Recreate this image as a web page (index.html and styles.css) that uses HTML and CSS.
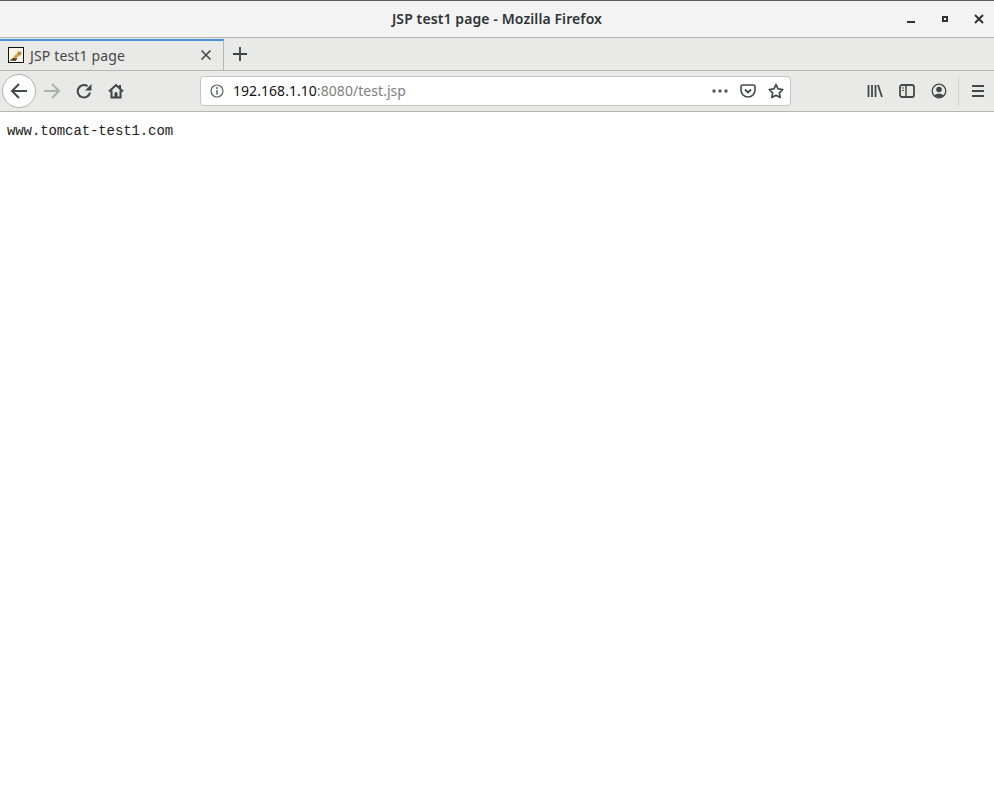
FILE: index.html
```html
<!DOCTYPE html>
<html lang="en">
<head>
  <meta charset="UTF-8">
  <title>JSP test1 page</title>
  <link rel="stylesheet" href="styles.css">
</head>
<body>

  <div class="titlebar">
    <span class="title">JSP test1 page - Mozilla Firefox</span>
    <div class="wincontrols">
      <svg width="12" height="12" viewBox="0 0 12 12"><path d="M2 9h8" stroke="#2e3436" stroke-width="2"/></svg>
      <svg width="12" height="12" viewBox="0 0 12 12"><rect x="4" y="4" width="4" height="4" fill="none" stroke="#2e3436" stroke-width="2"/></svg>
      <svg width="12" height="12" viewBox="0 0 12 12"><path d="M2 2l8 8M10 2l-8 8" stroke="#2e3436" stroke-width="2"/></svg>
    </div>
  </div>

  <div class="tabstrip">
    <div class="tab">
      <svg class="favicon" width="16" height="16" viewBox="0 0 16 16">
        <rect x="0.5" y="0.5" width="15" height="15" fill="#f7f4ea" stroke="#111"/>
        <path d="M2 12.500l3-1.500 2-3 2-1.500 1-3 1.200 1.200h1L13 3.500l.5 3-1 2-2.500 1-1.500 2-3 .5z" fill="#d3a04c"/>
        <path d="M1.500 13.500l4-2.500 4 .5-2 2.500z" fill="#4e4330"/>
        <path d="M10.500 6h2v1h-2z" fill="#5d4a26"/>
      </svg>
      <span class="tabtitle">JSP test1 page</span>
      <svg class="tabclose" width="12" height="12" viewBox="0 0 12 12"><path d="M1.500 1.500l9 9M10.500 1.500l-9 9" stroke="#45484a" stroke-width="1.600"/></svg>
    </div>
    <div class="newtab">
      <svg width="16" height="16" viewBox="0 0 16 16"><path d="M8 1v14M1 8h14" stroke="#3f4345" stroke-width="1.800"/></svg>
    </div>
  </div>

  <div class="navbar">
    <div class="backbtn">
      <svg width="18" height="18" viewBox="0 0 18 18"><path d="M17 9H2M9 2L2 9l7 7" fill="none" stroke="#45484a" stroke-width="2"/></svg>
    </div>
    <svg class="forward" width="18" height="18" viewBox="0 0 18 18"><path d="M1 9h15M9 2l7 7-7 7" fill="none" stroke="#adafb0" stroke-width="2"/></svg>
    <svg class="reload" width="16" height="16" viewBox="0 0 16 16"><path d="M14 9.500A6.200 6.200 0 1 1 11.500 3.200" fill="none" stroke="#45484a" stroke-width="2"/><path d="M15.500 1v6.500H9z" fill="#45484a"/></svg>
    <svg class="home" width="16" height="16" viewBox="0 0 16 16"><path d="M1 8.500L8 2l7 6.500" fill="none" stroke="#3f4345" stroke-width="2"/><path d="M3.500 7.500V14.500h9V7.500" fill="none" stroke="#3f4345" stroke-width="2"/><path d="M6.500 15V10.500a1.500 1.500 0 0 1 3 0V15z" fill="#3f4345"/><path d="M11 2h2v3h-2z" fill="#3f4345"/></svg>

    <div class="urlbar">
      <svg class="info" width="14" height="14" viewBox="0 0 14 14"><circle cx="7" cy="7" r="6" fill="none" stroke="#5b5e60" stroke-width="1.200"/><path d="M7 6v4.500" stroke="#5b5e60" stroke-width="1.500"/><circle cx="7" cy="4" r="1" fill="#5b5e60"/></svg>
      <span class="url"><span class="host">192.168.1.10</span>:8080/test.jsp</span>
      <svg class="dots" width="16" height="4" viewBox="0 0 16 4"><circle cx="2" cy="2" r="1.700" fill="#55585a"/><circle cx="8" cy="2" r="1.700" fill="#55585a"/><circle cx="14" cy="2" r="1.700" fill="#55585a"/></svg>
      <svg class="pocket" width="16" height="14" viewBox="0 0 16 14"><path d="M1 2.500a1.500 1.500 0 0 1 1.500-1.500h11A1.500 1.500 0 0 1 15 2.500V6a7 7 0 0 1-14 0z" fill="none" stroke="#45484a" stroke-width="1.600"/><path d="M5 5.500l3 3 3-3" fill="none" stroke="#45484a" stroke-width="1.800"/></svg>
      <svg class="star" width="16" height="16" viewBox="0 0 16 16"><path d="M8 1.500l2 4.400 4.800.6-3.500 3.300.9 4.700L8 12.200l-4.200 2.300.9-4.700L1.200 6.500 6 5.900z" fill="none" stroke="#45484a" stroke-width="1.700" stroke-linejoin="round"/></svg>
    </div>

    <div class="tools">
      <svg width="16" height="14" viewBox="0 0 16 14"><path d="M1.500 1v12M5 1v12M8.500 1v12M11 1l4 12" stroke="#45484a" stroke-width="1.800"/></svg>
      <svg width="16" height="14" viewBox="0 0 16 14"><rect x="1" y="1" width="14" height="12" rx="2" fill="none" stroke="#45484a" stroke-width="1.800"/><path d="M7 1v12" stroke="#45484a" stroke-width="1.500"/><path d="M3 4h2M3 6.500h2" stroke="#45484a"/></svg>
      <svg width="16" height="16" viewBox="0 0 16 16"><circle cx="8" cy="8" r="6.800" fill="none" stroke="#45484a" stroke-width="1.300"/><circle cx="8" cy="6.500" r="2.800" fill="#45484a"/><path d="M3.500 12.500c1-2.500 8-2.500 9 0-2 2-7 2-9 0z" fill="#45484a"/></svg>
    </div>
    <div class="menusep"></div>
    <svg class="menu" width="14" height="12" viewBox="0 0 14 12"><path d="M1 1h12M1 6h12M1 11h12" stroke="#45484a" stroke-width="2"/></svg>
  </div>

  <div class="content">www.tomcat-test1.com</div>

</body>
</html>
```

FILE: styles.css
```css
html, body {
  margin: 0;
  padding: 0;
}

body {
  width: 994px;
  height: 802px;
  overflow: hidden;
  background-color: #fff;
  font-family: "Noto Sans", "Open Sans", sans-serif;
}

svg {
  display: block;
  flex: none;
}

.titlebar {
  height: 38px;
  box-sizing: border-box;
  border-top: 1px solid #5e5e5e;
  border-bottom: 1px solid #b3b3b0;
  background-color: #f3f3f3;
  padding-bottom: 2px;
  display: flex;
  align-items: center;
  justify-content: center;
  position: relative;
}

.title {
  font-size: 14px;
  font-weight: 600;
  letter-spacing: 0.1px;
  color: #2e3436;
}

.wincontrols {
  position: absolute;
  right: 9px;
  top: 12px;
  display: flex;
  gap: 22px;
}

.tabstrip {
  height: 33px;
  box-sizing: border-box;
  background-color: #e9e9e7;
  padding-top: 1px;
  border-bottom: 1px solid #b5b5b3;
  display: flex;
}

.tab {
  width: 224px;
  height: 32px;
  box-sizing: border-box;
  border-top: 2px solid #4a90d9;
  border-right: 1px solid #b5b5b3;
  padding: 0 11px 2px 8px;
  display: flex;
  align-items: center;
}

.tabtitle {
  flex: 1;
  margin-left: 6px;
  font-size: 14px;
  letter-spacing: 0.15px;
  color: #45484a;
}

.newtab {
  width: 31px;
  padding-bottom: 2px;
  display: flex;
  align-items: center;
  justify-content: center;
}

.navbar {
  height: 41px;
  box-sizing: border-box;
  background-color: #e9e9e7;
  border-bottom: 1px solid #b5b5b3;
  display: flex;
  align-items: center;
  padding-left: 2px;
}

.backbtn {
  width: 32px;
  height: 32px;
  border: 1px solid #b1b1b1;
  border-radius: 50%;
  background-color: #fff;
  display: flex;
  align-items: center;
  justify-content: center;
}

.forward {
  margin-left: 7px;
}

.reload {
  margin-left: 15px;
}

.home {
  margin-left: 16px;
}

.urlbar {
  width: 591px;
  height: 30px;
  margin-left: 76px;
  box-sizing: border-box;
  background-color: #fff;
  border: 1px solid #c4c4c2;
  border-radius: 4px;
  display: flex;
  align-items: center;
  padding: 0 6px 0 9px;
}

.url {
  flex: 1;
  margin-left: 9px;
  margin-bottom: 1px;
  font-size: 14px;
  letter-spacing: 0.05px;
  color: #808080;
}

.host {
  color: #111;
}

.pocket {
  margin-left: 12px;
}

.star {
  margin-left: 12px;
}

.tools {
  margin-left: 76px;
  display: flex;
  align-items: center;
  gap: 16px;
}

.menusep {
  width: 1px;
  height: 30px;
  margin-left: 11px;
  background-color: #d2d2d0;
}

.menu {
  margin-left: 12px;
}

.content {
  padding: 11px 0 0 7px;
  font-family: "Liberation Mono", monospace;
  font-size: 14px;
  line-height: 16px;
  letter-spacing: -0.1px;
  color: #222;
}
```
